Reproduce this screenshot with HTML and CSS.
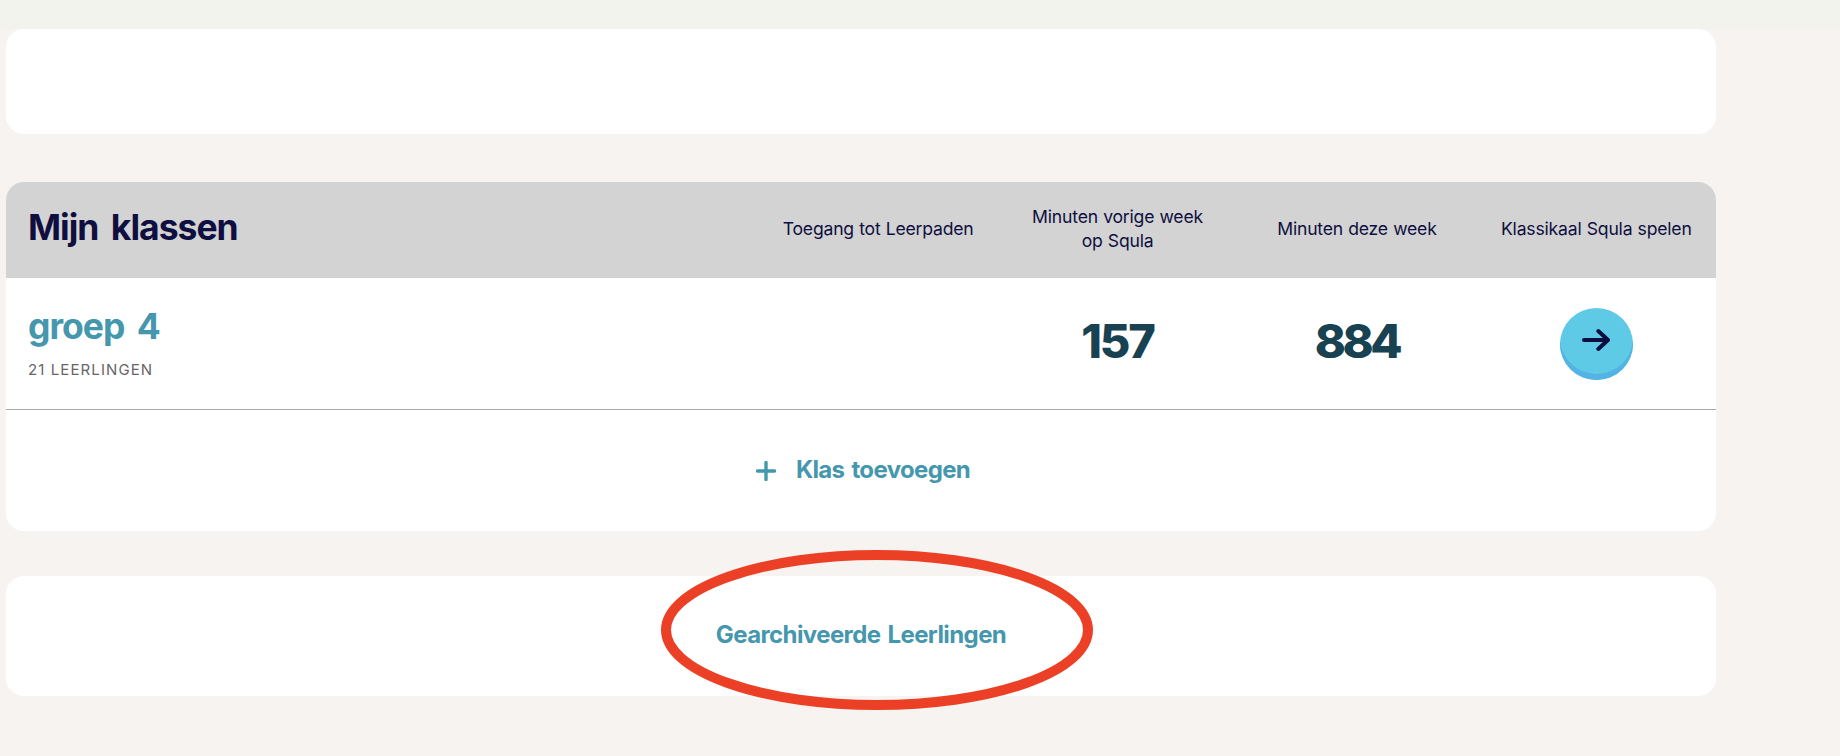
FILE: index.html
```html
<!DOCTYPE html>
<html lang="nl">
<head>
    <meta charset="UTF-8">
    <meta name="viewport" content="width=device-width, initial-scale=1.0">
    <title>Mijn klassen</title>
    <link rel="stylesheet" href="styles.css">
</head>
<body>
    <div class="top-strip"></div>

    <main class="page">
        <section class="card card-empty"></section>

        <section class="card card-classes">
            <header class="class-grid class-header">
                <h2>Mijn klassen</h2>
                <span>Toegang tot Leerpaden</span>
                <span>Minuten vorige week<br>op Squla</span>
                <span>Minuten deze week</span>
                <span>Klassikaal Squla spelen</span>
            </header>
            <div class="class-grid class-row">
                <div class="class-name">
                    <a href="#">groep 4</a>
                    <p>21 LEERLINGEN</p>
                </div>
                <span></span>
                <span class="minutes minutes-last">157</span>
                <span class="minutes">884</span>
                <button class="play-button" aria-label="Klassikaal Squla spelen">
                    <svg width="28" height="24" viewBox="0 0 28 24">
                        <path d="M2 12H26M16.3 3L26 12L16.3 21"/>
                    </svg>
                </button>
            </div>
            <a class="add-class" href="#">
                <svg width="20" height="20" viewBox="0 0 20 20">
                    <path d="M10 1.5V18.5M1.5 10H18.5"/>
                </svg>
                <span>Klas toevoegen</span>
            </a>
        </section>

        <section class="card card-archive">
            <a href="#">Gearchiveerde Leerlingen</a>
            <svg class="marker" width="432" height="160" viewBox="0 0 432 160">
                <ellipse cx="216" cy="80" rx="211" ry="75"/>
            </svg>
        </section>
    </main>
</body>
</html>
```

FILE: styles.css
```css
body {
    margin: 0;
    min-height: 100vh;
    font-family: Inter, "Liberation Sans", sans-serif;
    background: #f6f3f0;
}
a {
    color: #4497ad;
    text-decoration: none;
    font-weight: 700;
}
svg {
    fill: none;
    stroke-linecap: round;
    stroke-linejoin: round;
}

.top-strip {
    height: 29px;
    background: #f3f3ee;
}
.page {
    width: 1710px;
    margin-left: 6px;
}

/* Cards */
.card {
    background: #fff;
    border-radius: 18px;
}
.card-empty {
    height: 105px;
    margin-bottom: 48px;
}
.card-classes {
    height: 349px;
    margin-bottom: 45px;
    overflow: hidden;
}
.card-archive {
    position: relative;
    height: 120px;
    display: flex;
    align-items: center;
    justify-content: center;
    font-size: 24px;
    letter-spacing: -0.6px;
    word-spacing: 2px;
}
.card-archive a {
    padding-bottom: 3px;
}

/* Class table */
.class-grid {
    display: grid;
    grid-template-columns: 1fr repeat(4, 14%);
    align-items: center;
    text-align: center;
}
.class-header {
    height: 96px;
    background: #d3d3d3;
    color: #0e0f40;
    font-size: 17.6px;
    line-height: 24px;
    letter-spacing: -0.2px;
    word-spacing: 0.5px;
}
.class-header span {
    padding-bottom: 2px;
}
.class-header h2 {
    margin: 0;
    padding: 0 0 4px 22px;
    font-size: 35.5px;
    line-height: 40px;
    font-weight: 700;
    letter-spacing: -1px;
    word-spacing: 5px;
    text-align: left;
}
.class-row {
    height: 131px;
    border-bottom: 1px solid #a9a9a9;
}
.class-name {
    padding-left: 22px;
    text-align: left;
}
.class-name a {
    font-size: 35.5px;
    line-height: 40px;
    letter-spacing: -1px;
    word-spacing: 5px;
}
.class-name p {
    margin: 13px 0 0;
    color: #666;
    font-size: 15px;
    line-height: 20px;
    letter-spacing: 1.1px;
}
.minutes {
    padding-bottom: 6px;
    color: #184152;
    font-size: 47px;
    line-height: 56px;
    font-weight: 800;
    letter-spacing: -3.5px;
}
.minutes-last {
    letter-spacing: -2.2px;
}

/* Round arrow button */
.play-button {
    justify-self: center;
    display: flex;
    align-items: center;
    justify-content: center;
    width: 73px;
    height: 72px;
    padding: 0 0 8px;
    border: none;
    border-radius: 50%;
    background: #5fcae5;
    box-shadow: inset 0 -6px 0 #53b3e4;
    cursor: pointer;
}
.play-button svg {
    stroke: #0e0f40;
    stroke-width: 4;
}

.add-class {
    display: flex;
    align-items: center;
    justify-content: center;
    gap: 20px;
    height: 121px;
    padding-left: 4px;
    font-size: 24px;
    letter-spacing: -0.65px;
    word-spacing: 2px;
}
.add-class span {
    padding-bottom: 2px;
}
.add-class svg {
    stroke: #4497ad;
    stroke-width: 3.4;
}

/* Red ring around the archive link */
.marker {
    position: absolute;
    left: 655px;
    top: -26px;
    stroke: #ec4026;
    stroke-width: 10;
    pointer-events: none;
}
```
